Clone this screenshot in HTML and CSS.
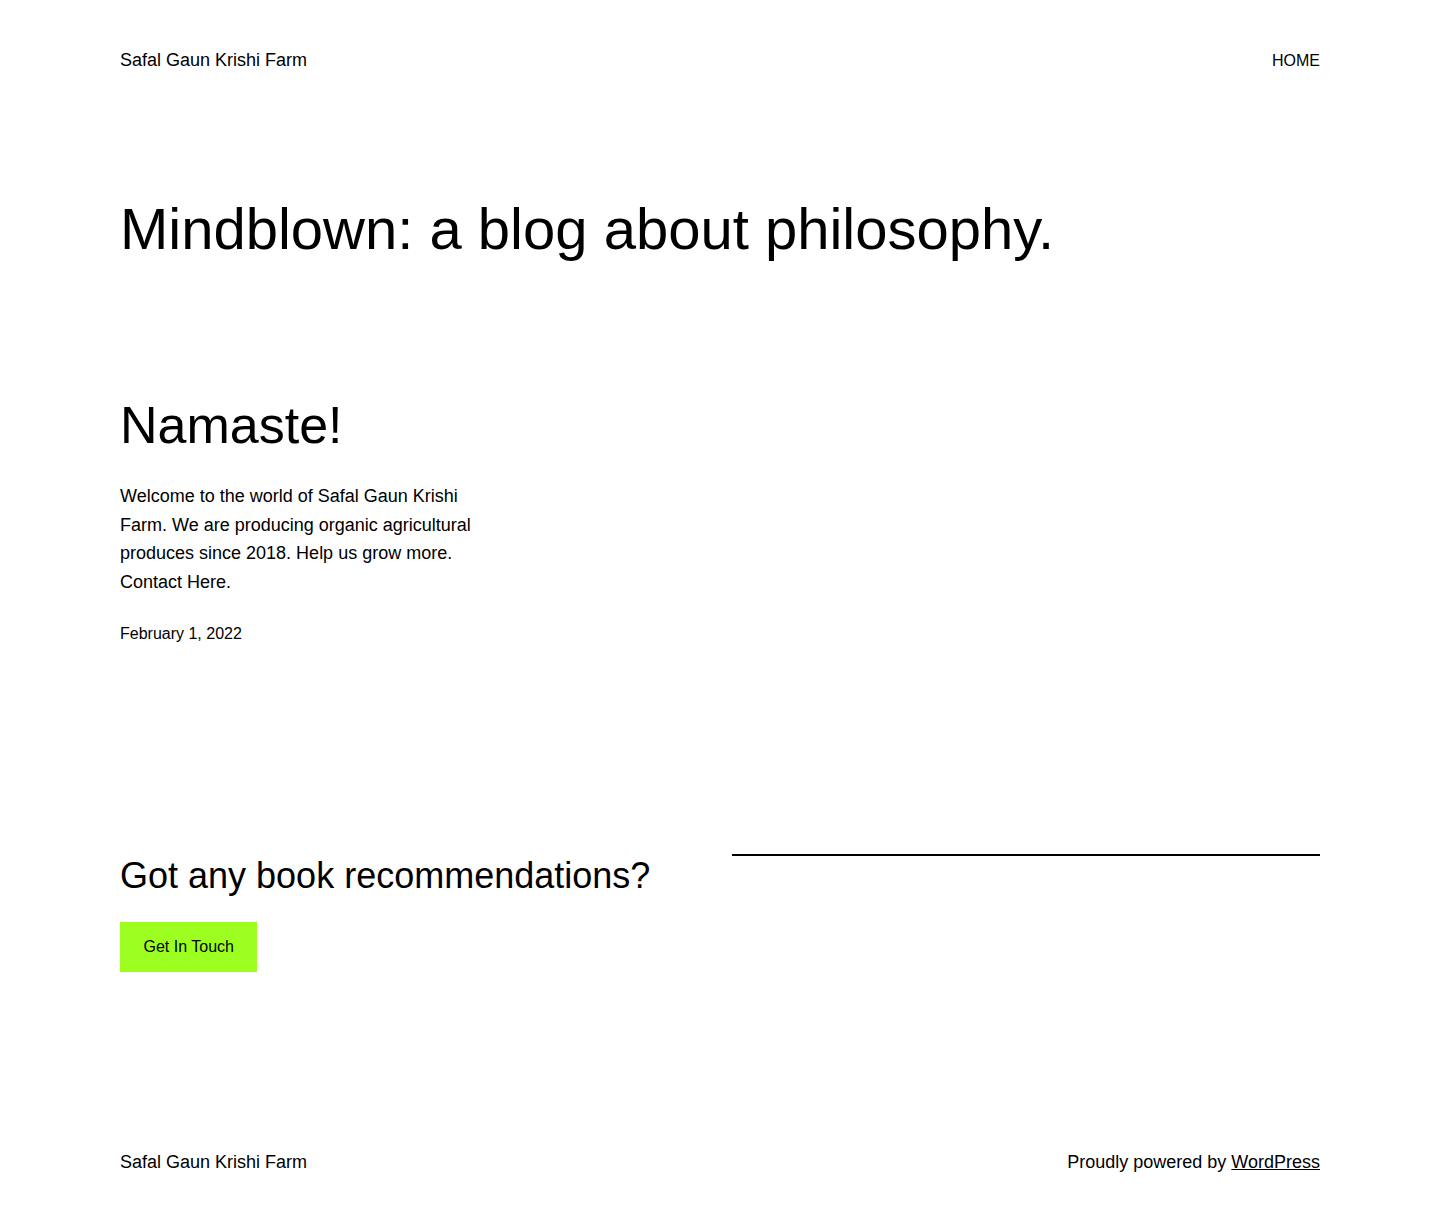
FILE: index.html
```html
<!DOCTYPE html>
<html lang="en">
<head>
<meta charset="utf-8">
<title>Safal Gaun Krishi Farm</title>
<link rel="stylesheet" href="styles.css">
</head>
<body>
<header class="site-header">
  <a class="site-title" href="#">Safal Gaun Krishi Farm</a>
  <nav class="site-nav"><a href="#">HOME</a></nav>
</header>
<main>
  <h1 class="page-title">Mindblown: a blog about philosophy.</h1>
  <article class="post">
    <h2 class="post-title"><a href="#">Namaste!</a></h2>
    <p class="post-excerpt">Welcome to the world of Safal Gaun Krishi Farm. We are producing organic agricultural produces since 2018. Help us grow more. Contact Here.</p>
    <div class="post-date">February 1, 2022</div>
  </article>
  <section class="cta">
    <div class="cta-col">
      <h2 class="cta-title">Got any book recommendations?</h2>
      <a class="button" href="#">Get In Touch</a>
    </div>
    <div class="cta-col">
      <hr class="separator">
    </div>
  </section>
</main>
<footer class="site-footer">
  <a class="site-title" href="#">Safal Gaun Krishi Farm</a>
  <p class="credit">Proudly powered by <a href="#">WordPress</a></p>
</footer>
</body>
</html>
```
FILE: styles.css
```css
html, body {
  margin: 0;
  padding: 0;
  background: #fff;
}
body {
  font-family: "Liberation Sans", Arial, sans-serif;
  color: #000;
  font-size: 18px;
  line-height: 1.6;
}
a {
  color: inherit;
  text-decoration: none;
}
.site-header {
  display: flex;
  justify-content: space-between;
  align-items: center;
  padding: 46px 120px 0;
}
.site-title {
  font-size: 18px;
  line-height: 28.8px;
}
.site-nav {
  font-size: 16px;
  line-height: 25.6px;
}
.page-title {
  margin: 122px 120px 0;
  font-size: 58px;
  line-height: 1.1;
  font-weight: 400;
}
.post {
  margin-top: 136px;
  padding: 0 120px;
}
.post-title {
  margin: 0;
  font-size: 52px;
  line-height: 1.1;
  font-weight: 400;
}
.post-excerpt {
  margin: 28px 0 0;
  width: 384px;
  font-size: 18px;
  line-height: 28.8px;
}
.post-date {
  margin-top: 24px;
  font-size: 16px;
  line-height: 25.6px;
}
.cta {
  display: grid;
  grid-template-columns: 1fr 1fr;
  column-gap: 24px;
  margin-top: 207px;
  padding: 0 120px;
}
.cta-title {
  margin: 0;
  font-size: 36px;
  line-height: 1.2;
  font-weight: 400;
}
.button {
  display: inline-block;
  margin-top: 25px;
  padding: 12.5px 23.5px;
  background: #9dff20;
  color: #000;
  font-size: 16px;
  line-height: 25.6px;
}
.separator {
  margin: 0;
  border: 0;
  height: 2px;
  background: #000;
}
.site-footer {
  display: flex;
  justify-content: space-between;
  align-items: center;
  margin-top: 176px;
  padding: 0 120px 50px;
}
.credit {
  margin: 0;
  font-size: 18px;
  line-height: 28.8px;
}
.credit a {
  text-decoration: underline;
}
```
